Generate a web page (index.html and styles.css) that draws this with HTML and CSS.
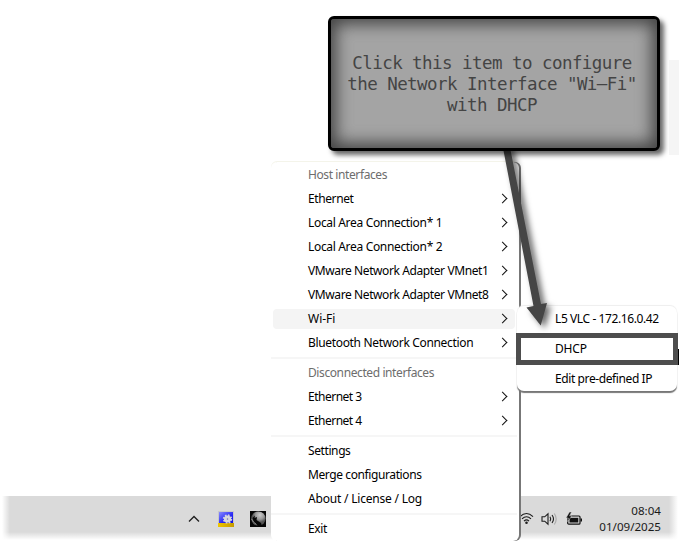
FILE: index.html
```html
<!DOCTYPE html>
<html lang="en">
<head>
<meta charset="utf-8">
<title>Network tray menu</title>
<link rel="stylesheet" href="styles.css">
</head>
<body>
<main class="desktop">
  <div class="window-edge"></div>
  <footer class="taskbar">
    <svg class="tray-chevron" width="12" height="8" viewBox="0 0 12 8"><path d="M1 6.5 6 1.5l5 5" fill="none" stroke="#222" stroke-width="1.4"/></svg>
    <svg class="tray-app" width="16" height="16" viewBox="0 0 16 16">
      <defs><linearGradient id="blue" x2="1" y2="1"><stop stop-color="#8a8cff"/><stop offset=".6" stop-color="#2828f4"/><stop offset="1" stop-color="#1010df"/></linearGradient>
      <linearGradient id="gold" x2="1"><stop stop-color="#efc600"/><stop offset="1" stop-color="#c59a00"/></linearGradient></defs>
      <path d="M0 0h16v12H0z" fill="#c8c8cc"/><path d="M1 1h14v11H1z" fill="url(#blue)"/><path d="M0 12h16v4H0z" fill="url(#gold)"/>
      <circle cx="9.5" cy="8" r="3.8" fill="none" stroke="#d2d2dc" stroke-width="1.8" stroke-dasharray="1.65 1.33"/><circle cx="9.5" cy="8" r="2.1" fill="none" stroke="#d8d8de" stroke-width="3"/><circle cx="9.5" cy="8" r=".8" fill="#9a9ab0"/>
    </svg>
    <svg class="tray-globe" width="16" height="16" viewBox="0 0 16 16">
      <defs><radialGradient id="moon" cx=".6" cy=".25"><stop stop-color="#ccc"/><stop offset=".6" stop-color="#999"/><stop offset="1" stop-color="#555"/></radialGradient></defs>
      <path d="M0 0h16v16H0z" fill="#050505"/><circle cx="8.4" cy="7.6" r="7.200" fill="url(#moon)"/><path d="M2.500 7 5 4.500 4.500 7 7 6l-.5 3 4.500 3 1 3H8L4 11.500z" fill="#050505"/><path d="M1.500 8 3.500 11l3 2.500" fill="none" stroke="#888"/>
    </svg>
    <svg class="tray-wifi" width="16" height="13" viewBox="0 0 16 13"><g fill="none" stroke="#1c1c1c" stroke-width="1.15"><path d="M1 4.700Q7.500-1.700 14 4.700M3 6.900q4.500-4.300 9 0M5 9.100q2.500-2.500 5 0"/></g><circle cx="7.500" cy="10.800" r="1.300" fill="#1c1c1c"/></svg>
    <svg class="tray-sound" width="17" height="14" viewBox="0 0 17 14"><g fill="none" stroke="#1c1c1c" stroke-width="1.1"><path d="M1 4.800h2.700L7 1.800v10.400l-3.300-3H1z"/><path d="M9 4.800q1.500 2.200 0 4.400M11 3q3 4 0 8"/><path d="M13.300 1.500q3.800 5.500 0 11" stroke="#aaa"/></g></svg>
    <svg class="tray-battery" width="17" height="14" viewBox="0 0 17 14"><rect x="1.700" y="4" width="12.300" height="8.200" rx="1" fill="none" stroke="#111" stroke-width="1.2"/><path d="M3.500 5.800h8.800v4.700H3.500z" fill="#111"/><path d="M14.500 6.500H16v3h-1.500z" fill="#111"/><path d="M3.500 0 0 6h2.300L1.500 9.500 6 4H3.600L5.500 0z" fill="#111" stroke="#dadada" stroke-width=".5"/></svg>
    <div class="clock"><span>08:04</span><span>01/09/2025</span></div>
  </footer>

  <nav class="menu">
    <div class="item heading"><span>Host interfaces</span></div>
    <div class="item sub"><span>Ethernet</span></div>
    <div class="item sub connection"><span>Local Area Connection* 1</span></div>
    <div class="item sub connection"><span>Local Area Connection* 2</span></div>
    <div class="item sub"><span>VMware Network Adapter VMnet1</span></div>
    <div class="item sub"><span>VMware Network Adapter VMnet8</span></div>
    <div class="item sub active"><span>Wi-Fi</span></div>
    <div class="item sub connection"><span>Bluetooth Network Connection</span></div>
    <hr>
    <div class="item heading"><span>Disconnected interfaces</span></div>
    <div class="item sub tight"><span>Ethernet 3</span></div>
    <div class="item sub tight"><span>Ethernet 4</span></div>
    <hr>
    <div class="item"><span>Settings</span></div>
    <div class="item"><span>Merge configurations</span></div>
    <div class="item loose"><span>About / License / Log</span></div>
    <hr>
    <div class="item"><span>Exit</span></div>
  </nav>

  <nav class="submenu">
    <div class="choice">L5 VLC - 172.16.0.42</div>
    <div class="choice marked">DHCP</div>
    <div class="choice last">Edit pre-defined IP</div>
  </nav>

  <svg class="pointer" width="80" height="190" viewBox="0 0 80 190"><path d="M12.500 5h7L51 164l6-1-6.300 22.500L36.500 167.500l7-1.500L13 8z" fill="#454545"/></svg>
  <aside class="callout">Click this item to configure<br>the Network Interface "Wi–Fi"<br>with DHCP</aside>
</main>
</body>
</html>
```
FILE: styles.css
```css
* { box-sizing: border-box; }
body { margin: 0; background: #fff; font: 12px/24px "Noto Sans", sans-serif; color: #000; }
.desktop { position: relative; width: 679px; height: 541px; overflow: hidden; display: flex; align-items: flex-end; }
.window-edge { position: absolute; left: 669px; top: 60px; width: 10px; height: 95px; background: #f5f5f5; }
.taskbar {
  position: relative; width: 679px; height: 45px; padding-left: 188px; display: flex; align-items: center;
  background: #dadada;
}
.taskbar::after {
  content: ""; position: absolute; inset: 0;
  background: linear-gradient(90deg, #fff 2px, #fff0 10px, #fff0 669px, #fff 678px), linear-gradient(#fff0 36px, #fff 44px);
}
.tray-app { margin-left: 18px; }
.tray-globe { margin-left: 16px; }
.tray-wifi { margin-left: 253px; }
.tray-sound { margin-left: 6px; }
.tray-battery { margin-left: 8px; }
.clock { margin-left: auto; padding-right: 18px; display: flex; flex-direction: column; align-items: flex-end; line-height: 16px; font-size: 11.6px; color: #191919; }
.menu {
  position: absolute; left: 271px; top: 162px; width: 248px; height: 379px; padding: 1px 0 0;
  background: #fff; border-radius: 6px; box-shadow: 2px 0 0 #777, 0 -1px 0 #f4f4ea;
}
.item { display: flex; align-items: center; height: 24px; padding-left: 37px; white-space: nowrap; letter-spacing: -.4px; }
.connection { letter-spacing: -.33px; }
.tight { letter-spacing: -.5px; }
.loose { letter-spacing: -.2px; }
.heading { color: #6d6d6d; }
.sub { justify-content: space-between; padding-right: 13px; }
.sub::after { content: ""; width: 6px; height: 6px; margin-top: -2px; border: solid #111; border-width: 1px 1px 0 0; transform: rotate(45deg); }
.active { height: 20px; margin: 2px 4px 2px 2px; padding: 0 9px 0 35px; background: #f4f4f4; border-radius: 4px; letter-spacing: 0; }
.menu hr { height: 6px; margin: 0 2px 0 0; border: solid #fff; border-width: 2px 0; background: #f6f6f6; }
.submenu {
  position: absolute; left: 517px; top: 306px; width: 160px; height: 85px;
  background: #fff; border-radius: 7px; box-shadow: 0 -1px 1px #eee, 0 2px 1px #777;
}
.choice { height: 27px; line-height: 26px; padding-left: 38px; white-space: nowrap; letter-spacing: -.4px; }
.last { line-height: 28px; }
.marked { height: 32px; line-height: 22px; margin: 0 -1px; padding-left: 34px; border: 5px solid #4d4d4d; background: #fff; letter-spacing: -.2px; }
.submenu::after { content: ""; position: absolute; left: 161px; top: 43px; width: 1px; height: 16px; background: #000; }
.pointer { position: absolute; left: 490px; top: 140px; filter: drop-shadow(4px 3px 3px #0009); }
.callout {
  position: absolute; left: 328px; top: 16px; width: 332px; height: 135px; padding-top: 34px; padding-right: 4px;
  border: 3px solid #000; border-radius: 6px; background: #a4a4a4;
  box-shadow: inset 0 0 16px 5px #444, 4px 4px 5px #0009;
  font: 17.500px/21px "DejaVu Sans Mono", monospace; letter-spacing: -.55px; text-align: center; color: #444; white-space: nowrap;
}
```
